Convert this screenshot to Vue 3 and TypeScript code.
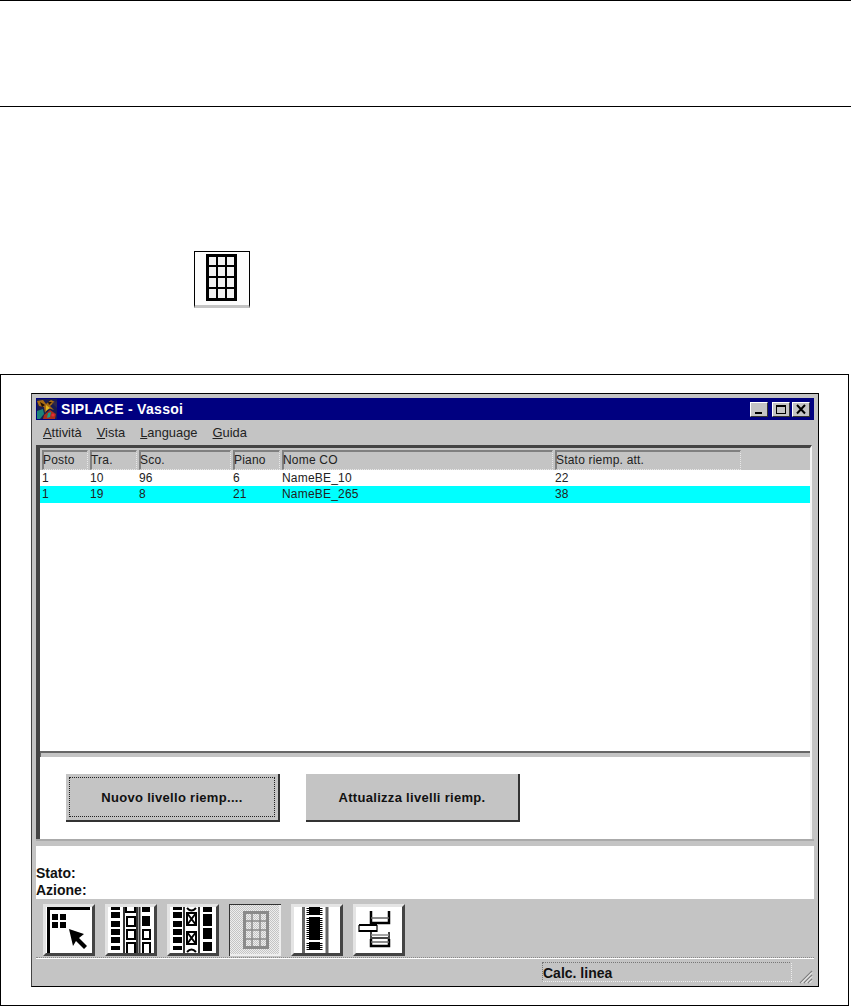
<script setup lang="ts">
const columns = [
  { label: 'Posto', width: 46 },
  { label: 'Tra.', width: 47 },
  { label: 'Sco.', width: 92 },
  { label: 'Piano', width: 47 },
  { label: 'Nome CO', width: 271 },
  { label: 'Stato riemp. att.', width: 186 },
]
const rows = [
  { cells: ['1', '10', '96', '6', 'NameBE_10', '22'], selected: false },
  { cells: ['1', '19', '8', '21', 'NameBE_265', '38'], selected: true },
]
const menus = [
  { key: 'A', rest: 'ttività' },
  { key: 'V', rest: 'ista' },
  { key: 'L', rest: 'anguage' },
  { key: 'G', rest: 'uida' },
]
const tiles = ['select', 'slots', 'crossed', 'disabled', 'film', 'trays']
const blackSquares = [[3, 3], [8, 6], [17, 6], [25, 6], [33, 6], [42, 4]]
const pinRows = [4, 6, 8, 10, 14, 16, 18, 20, 22, 24, 26, 28, 30, 32, 34, 39, 41, 43, 45]
</script>

<template>
  <div class="page">
    <div class="rule-band"></div>
    <div class="sample-icon">
      <svg width="31" height="47" viewBox="0 0 31 47">
        <rect x="1.5" y="1.5" width="28" height="44" fill="#f2f2f2" stroke="#000" stroke-width="3" />
        <path d="M11 2V45M20 2V45M2 12H29M2 23H29M2 34H29" stroke="#000" stroke-width="2" fill="none" />
      </svg>
    </div>
    <div class="frame">
      <div class="window">
        <div class="titlebar">
          <svg class="logo" width="20" height="20" viewBox="0 0 20 20">
            <rect width="20" height="20" fill="#181c50" />
            <path d="M0 2L6 1L9 5L14 1L18 3L13 7L17 11L11 9L8 14L7 8L2 7Z" fill="#a86a14" />
            <path d="M3 3L8 6L5 8ZM11 3L15 3L12 6Z" fill="#201008" />
            <path d="M9 6L13 9L9 12Z" fill="#e2b820" />
            <path d="M0 12L6 10L7 15L3 20L0 20Z" fill="#1c8478" />
            <path d="M7 16L13 11L19 15L18 20L6 20Z" fill="#a8301c" />
            <path d="M11 14L14 13L13 18L10 19Z" fill="#1e9a88" />
            <circle cx="16" cy="16" r="1.6" fill="#e82838" />
            <path d="M15 4L20 2V9Z" fill="#302848" />
          </svg>
          <span class="title">SIPLACE - Vassoi</span>
          <div class="caption-buttons">
            <span class="cap-btn"><svg width="14" height="11" viewBox="0 0 14 11"><rect x="3" y="8" width="7" height="2" fill="#000" /></svg></span>
            <span class="cap-btn maximize"><svg width="14" height="11" viewBox="0 0 14 11"><rect x="2.5" y="1.5" width="9" height="8" fill="none" stroke="#000" /><rect x="2" y="1" width="10" height="2" fill="#000" /></svg></span>
            <span class="cap-btn"><svg width="14" height="11" viewBox="0 0 14 11"><path d="M3 1L11 9.5M11 1L3 9.5" stroke="#000" stroke-width="2" /></svg></span>
          </div>
        </div>
        <div class="menubar">
          <span v-for="m in menus" :key="m.key" class="menu-item"><u>{{ m.key }}</u>{{ m.rest }}</span>
        </div>
        <div class="sunken">
          <div class="list">
            <div class="header">
              <div v-for="c in columns" :key="c.label" class="head-cell" :style="{ width: c.width + 'px' }">{{ c.label }}</div>
            </div>
            <div v-for="(r, i) in rows" :key="i" class="row" :class="{ selected: r.selected }">
              <div v-for="(v, j) in r.cells" :key="j" class="cell" :style="{ width: columns[j].width + 'px' }">{{ v }}</div>
            </div>
          </div>
          <div class="splitter"></div>
          <div class="actions">
            <button class="action focused"><span>Nuovo livello riemp....</span></button>
            <button class="action"><span>Attualizza livelli riemp.</span></button>
          </div>
        </div>
        <div class="splitter lower"></div>
        <div class="info">
          <div>Stato:</div>
          <div>Azione:</div>
        </div>
        <div class="toolbar">
          <div v-for="t in tiles" :key="t" class="tile" :class="{ off: t === 'disabled' }">
            <svg width="46" height="46" viewBox="3 3 46 46">
              <template v-if="t === 'select'">
                <path d="M4 3H47V6H7V49H4Z" fill="#000" />
                <rect x="9" y="10" width="6" height="6" /><rect x="17" y="10" width="6" height="6" />
                <rect x="9" y="18" width="6" height="6" /><rect x="17" y="18" width="6" height="6" />
                <path d="M26 25L41 30L36 34L44 42L41 45L33 37L30 42Z" fill="#000" />
              </template>
              <template v-else-if="t === 'slots' || t === 'crossed'">
                <rect v-for="s in blackSquares" :key="s[0]" x="6" :y="s[0]" width="9" :height="s[1]" />
                <template v-if="t === 'slots'">
                  <path d="M19 3V49M32 3V49M34.5 3V49" stroke="#333" stroke-width="2" fill="none" />
                  <path d="M21 3V8H30V3" fill="none" stroke="#000" stroke-width="2" />
                  <rect x="22" y="13" width="8" height="9" fill="none" stroke="#000" stroke-width="2" />
                  <rect x="22" y="26" width="8" height="9" fill="none" stroke="#000" stroke-width="2" />
                  <path d="M22 49V39H30V49" fill="none" stroke="#000" stroke-width="2" />
                  <rect x="37" y="3" width="8" height="5" />
                  <rect x="37" y="12" width="8" height="10" />
                  <rect x="38" y="26" width="7" height="9" fill="none" stroke="#000" stroke-width="2" />
                  <path d="M38 49V39H45V49" fill="none" stroke="#000" stroke-width="2" />
                </template>
                <template v-else>
                  <path d="M17 3V49M32 3V49" stroke="#333" stroke-width="2" fill="none" />
                  <path d="M20 4Q24.5 9 29 4M20 48Q24.5 43 29 48" fill="none" stroke="#000" stroke-width="2" />
                  <rect x="20" y="9" width="9" height="12" fill="none" stroke="#000" stroke-width="2" />
                  <rect x="20" y="28" width="9" height="12" fill="none" stroke="#000" stroke-width="2" />
                  <path d="M20 9L29 21M29 9L20 21M20 28L29 40M29 28L20 40" stroke="#000" stroke-width="2" />
                  <rect x="36" y="3" width="9" height="5" />
                  <rect x="36" y="10" width="9" height="12" />
                  <rect x="36" y="24" width="9" height="11" />
                  <rect x="36" y="38" width="9" height="9" />
                </template>
              </template>
              <template v-else-if="t === 'disabled'">
                <rect x="15.5" y="8.5" width="23" height="35" fill="none" stroke="#8a8a8a" stroke-width="3" />
                <path d="M23 8V44M31 8V44M16 17H38M16 26H38M16 35H38" stroke="#8a8a8a" stroke-width="1.5" />
              </template>
              <template v-else-if="t === 'film'">
                <path d="M12.5 3V49M36 3V49" stroke="#666" stroke-width="3" />
                <rect x="18" y="3" width="11" height="8" />
                <rect x="18" y="13" width="11" height="23" />
                <rect x="18" y="38" width="11" height="8" />
                <path v-for="y in pinRows" :key="y" :d="`M15.5 ${y + 0.5}H31.5`" stroke="#000" stroke-width="1" />
              </template>
              <template v-else>
                <path d="M18 7V19H36V7" fill="none" stroke="#000" stroke-width="2.5" />
                <path d="M18 14H36" stroke="#666" stroke-width="1.5" />
                <path d="M6 21V27H24V21" fill="none" stroke="#666" stroke-width="2" />
                <path d="M6 21H24M6 27H24" stroke="#000" stroke-width="2" />
                <path d="M18 28V34H36V28" fill="none" stroke="#444" stroke-width="2" />
                <path d="M18 31H36" stroke="#888" stroke-width="1.5" />
                <path d="M18 35V42H36V35" fill="none" stroke="#000" stroke-width="2.5" />
                <path d="M18 38H36" stroke="#666" stroke-width="1.5" />
              </template>
            </svg>
          </div>
        </div>
        <div class="statusbar">
          <div class="status-box">Calc. linea</div>
          <svg class="grip" width="15" height="15" viewBox="0 0 15 15">
            <path d="M14 2L2 14M14 6L6 14M14 10L10 14" stroke="#808080" stroke-width="1.2" />
            <path d="M14 3.5L3.5 14M14 7.5L7.5 14M14 11.5L11.5 14" stroke="#fff" stroke-width="1" />
          </svg>
        </div>
      </div>
    </div>
  </div>
</template>

<style>
html, body { background: #fff; }
</style>

<style scoped>
.page {
  width: 851px;
  height: 1006px;
  overflow: hidden;
  background: #fff;
  display: flex;
  flex-direction: column;
  font-family: "Liberation Sans", Arial, sans-serif;
  color: #000;
}
.rule-band {
  height: 107px;
  box-sizing: border-box;
  border-top: 1px solid #000;
  border-bottom: 1px solid #000;
  flex: none;
}
.sample-icon {
  margin: 144px 0 0 194px;
  width: 56px;
  height: 57px;
  box-sizing: border-box;
  border: 1px solid #000;
  border-bottom: 3px solid #c4c4c4;
  background: #fdfdfd;
  display: flex;
  justify-content: center;
  padding-top: 2px;
  padding-right: 1px;
  flex: none;
}
.frame {
  margin-top: 66px;
  width: 849px;
  height: 632px;
  box-sizing: border-box;
  border: 1px solid #000;
  padding: 18px 0 0 30px;
  flex: none;
}
.window {
  width: 788px;
  height: 594px;
  box-sizing: border-box;
  background: #c4c4c4;
  border: 1px solid #000;
  border-left-color: #444;
  padding: 4px 4px 0;
  display: flex;
  flex-direction: column;
}
.titlebar {
  height: 22px;
  background: #000080;
  display: flex;
  align-items: center;
  flex: none;
}
.logo { margin-left: 1px; flex: none; }
.title {
  margin-left: 4px;
  color: #fff;
  font-weight: bold;
  font-size: 14px;
  letter-spacing: 0.3px;
}
.caption-buttons {
  margin-left: auto;
  margin-right: 4px;
  display: flex;
  gap: 2px;
}
.cap-btn {
  width: 18px;
  height: 15px;
  box-sizing: border-box;
  background: #c4c4c4;
  border: 1px solid;
  border-color: #fff #333 #333 #fff;
  display: flex;
  align-items: center;
  justify-content: center;
}
.cap-btn.maximize { margin-left: 2px; }
.cap-btn svg { display: block; }
.menubar {
  height: 25px;
  display: flex;
  align-items: center;
  gap: 15px;
  padding-left: 7px;
  font-size: 12.9px;
  flex: none;
  color: #222;
}
.menu-item { white-space: nowrap; }
.sunken {
  width: 776px;
  height: 394px;
  box-sizing: border-box;
  border-top: 3px solid #444;
  border-left: 4px solid #444;
  border-right: 2px solid #f4f4f4;
  display: flex;
  flex-direction: column;
  flex: none;
}
.list {
  height: 303px;
  box-sizing: border-box;
  padding-top: 2px;
  background: linear-gradient(#c4c4c4 0 22px, #fff 22px);
  flex: none;
  font-size: 12px;
  letter-spacing: 0.2px;
}
.header {
  height: 20px;
  display: flex;
  padding-left: 2px;
  gap: 2px;
}
.head-cell {
  box-sizing: border-box;
  height: 20px;
  border-top: 2px solid #808080;
  border-left: 2px solid #808080;
  border-right: 1px dotted #e8e8e8;
  border-bottom: 1px dotted #e8e8e8;
  text-indent: -1px;
  line-height: 17px;
  color: #222;
  white-space: nowrap;
}
.row {
  height: 16px;
  display: flex;
  padding-left: 2px;
  gap: 2px;
  line-height: 16px;
  color: #222;
}
.row.selected { height: 17px; line-height: 17px; background: #00ffff; }
.cell { white-space: nowrap; box-sizing: border-box; }
.splitter {
  height: 6px;
  background: #c4c4c4;
  border-top: 2px solid #666;
  border-left: 1px solid #666;
  box-sizing: border-box;
  flex: none;
}
.actions {
  flex: 1;
  background: #fff;
  padding: 17px 0 0 26px;
  display: flex;
  gap: 26px;
  align-items: flex-start;
}
.action {
  width: 214px;
  height: 48px;
  padding: 3px;
  background: #c4c4c4;
  border: none;
  border-right: 2px solid #333;
  border-bottom: 2px solid #333;
  box-sizing: border-box;
  font: bold 13px "Liberation Sans", Arial, sans-serif;
  letter-spacing: 0.3px;
  color: #111;
  display: flex;
}
.action span {
  flex: 1;
  display: flex;
  align-items: center;
  justify-content: center;
  border: 1px dotted transparent;
}
.action.focused span { border-color: #222; }
.splitter.lower { height: 7px; border-top: 2px solid #aaa; border-left: none; }
.info {
  height: 53px;
  box-sizing: border-box;
  background: #fff;
  padding-top: 19px;
  font-size: 14px;
  font-weight: bold;
  line-height: 17px;
  flex: none;
  color: #111;
}
.toolbar {
  height: 59px;
  box-sizing: border-box;
  display: flex;
  gap: 10px;
  padding: 5px 0 0 7px;
  flex: none;
  border-bottom: 1px dotted #8a8a8a;
}
.tile {
  width: 52px;
  height: 52px;
  box-sizing: border-box;
  background: #fff;
  border: 3px solid;
  border-color: #e4e4e4 #444 #444 #e4e4e4;
}
.tile svg { display: block; }
.tile.off {
  border: none;
  padding: 3px;
  background: repeating-conic-gradient(#c4c4c4 0 25%, #eeeeee 0 50%) 0 0 / 2px 2px;
  box-shadow: inset 1px 1px #333, inset -2px -2px #eee;
}
.statusbar {
  position: relative;
  flex: 1;
  border-top: 1px solid #fff;
  padding: 3px 0 0 506px;
}
.status-box {
  width: 250px;
  height: 20px;
  box-sizing: border-box;
  border: 1px dotted;
  border-color: #777 #eee #eee #777;
  font-size: 14px;
  font-weight: bold;
  line-height: 20px;
  color: #111;
}
.grip {
  position: absolute;
  right: 1px;
  bottom: 2px;
}
</style>
